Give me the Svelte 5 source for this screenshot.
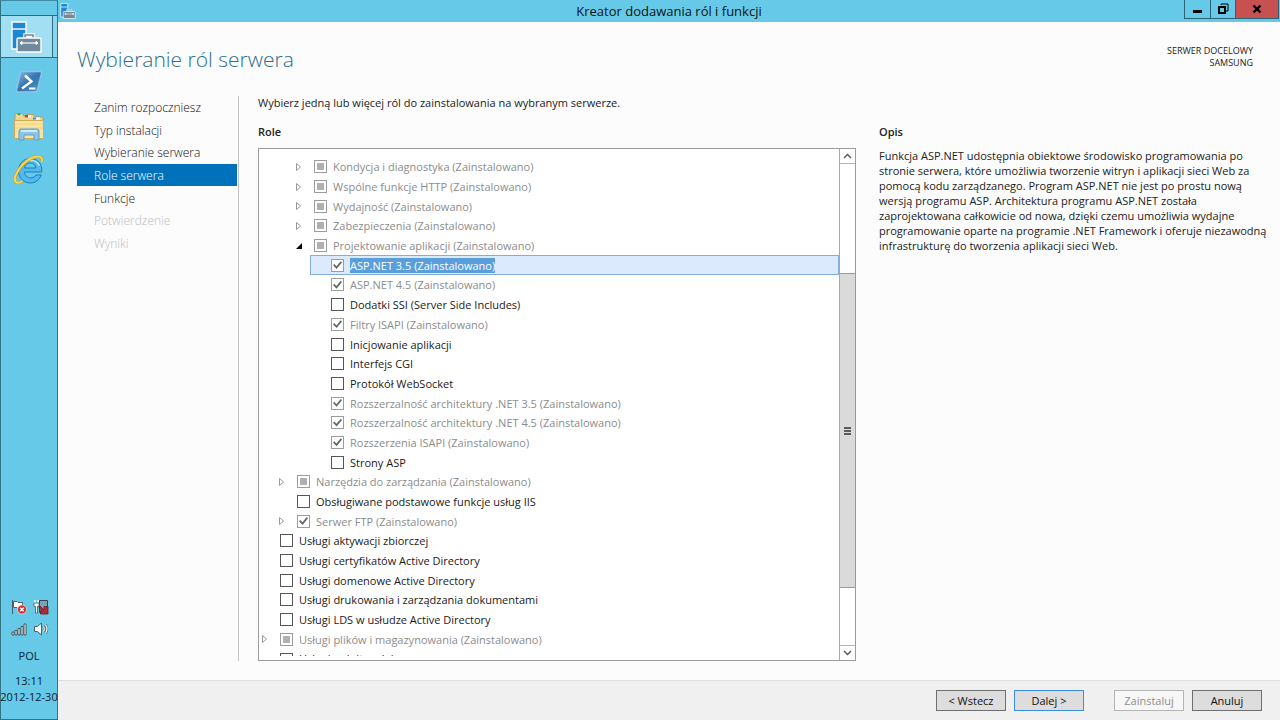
<script>
	const steps = [
		{ label: "Zanim rozpoczniesz" },
		{ label: "Typ instalacji" },
		{ label: "Wybieranie serwera" },
		{ label: "Role serwera", current: true },
		{ label: "Funkcje" },
		{ label: "Potwierdzenie", disabled: true },
		{ label: "Wyniki", disabled: true },
	];

	// state: 'off' | 'on' | 'partial'
	const roles = [
		{ level: 2, arrow: "closed", state: "partial", label: "Kondycja i diagnostyka", installed: true },
		{ level: 2, arrow: "closed", state: "partial", label: "Wspólne funkcje HTTP", installed: true },
		{ level: 2, arrow: "closed", state: "partial", label: "Wydajność", installed: true },
		{ level: 2, arrow: "closed", state: "partial", label: "Zabezpieczenia", installed: true },
		{ level: 2, arrow: "open", state: "partial", label: "Projektowanie aplikacji", installed: true },
		{ level: 3, state: "on", label: "ASP.NET 3.5", installed: true },
		{ level: 3, state: "on", label: "ASP.NET 4.5", installed: true },
		{ level: 3, state: "off", label: "Dodatki SSI (Server Side Includes)" },
		{ level: 3, state: "on", label: "Filtry ISAPI", installed: true },
		{ level: 3, state: "off", label: "Inicjowanie aplikacji" },
		{ level: 3, state: "off", label: "Interfejs CGI" },
		{ level: 3, state: "off", label: "Protokół WebSocket" },
		{ level: 3, state: "on", label: "Rozszerzalność architektury .NET 3.5", installed: true },
		{ level: 3, state: "on", label: "Rozszerzalność architektury .NET 4.5", installed: true },
		{ level: 3, state: "on", label: "Rozszerzenia ISAPI", installed: true },
		{ level: 3, state: "off", label: "Strony ASP" },
		{ level: 1, arrow: "closed", state: "partial", label: "Narzędzia do zarządzania", installed: true },
		{ level: 1, state: "off", label: "Obsługiwane podstawowe funkcje usług IIS" },
		{ level: 1, arrow: "closed", state: "on", label: "Serwer FTP", installed: true },
		{ level: 0, state: "off", label: "Usługi aktywacji zbiorczej" },
		{ level: 0, state: "off", label: "Usługi certyfikatów Active Directory" },
		{ level: 0, state: "off", label: "Usługi domenowe Active Directory" },
		{ level: 0, state: "off", label: "Usługi drukowania i zarządzania dokumentami" },
		{ level: 0, state: "off", label: "Usługi LDS w usłudze Active Directory" },
		{ level: 0, arrow: "closed", state: "partial", label: "Usługi plików i magazynowania", installed: true },
		{ level: 0, state: "off", label: "Usługi pulpitu zdalnego", cut: true },
	];

	let selected = $state(5);
</script>

{#snippet serverIcon()}
	<path d="M1 1h14v27H1z" fill="#1b87d6" stroke="#fff" stroke-width="1.4" />
	<path d="M1 8h14" stroke="#fff" stroke-width="1.4" />
	<path d="M14 17v-3h8v3" fill="none" stroke="#fff" stroke-width="3.4" />
	<path d="M14 17v-3h8v3" fill="none" stroke="#6f8797" stroke-width="1.6" />
	<path d="M6 18.500q0-1.500 1.500-1.500h21q1.500 0 1.500 1.500V31H6z" fill="#718a9b" stroke="#fff" stroke-width="1.4" />
	<path d="M9 22h18" stroke="#fff" stroke-width="1.2" />
	<path d="M9 22l2-1.500v3zM27 22l-2-1.500v3z" fill="#fff" stroke="#fff" />
{/snippet}

<div class="desktop">
	<aside class="taskbar">
		<button class="task active" aria-label="Menedżer serwera">
			<svg width="31" height="32" viewBox="0 0 31 32">{@render serverIcon()}</svg>
		</button>
		<button class="task" aria-label="Windows PowerShell">
			<svg width="28" height="24" viewBox="0 0 28 24">
				<defs>
					<linearGradient id="ps" x1="0" y1="0" x2="1" y2="1">
						<stop offset="0" stop-color="#8dbfe3" />
						<stop offset="0.5" stop-color="#3473b0" />
						<stop offset="1" stop-color="#4a9ed6" />
					</linearGradient>
				</defs>
				<path d="M6.500 1.500H25q2 0 1.500 2L22.500 20q-.5 2-2.500 2H3q-2 0-1.500-2L5 3.500q.4-2 1.500-2z" fill="url(#ps)" stroke="#8fc4e4" stroke-width="1.500" />
				<path d="M10 5.500l6.500 6L7 18.500" fill="none" stroke="#fff" stroke-width="2.400" />
				<path d="M14 18.500h6.500" stroke="#fff" stroke-width="2" />
			</svg>
		</button>
		<button class="task" aria-label="Eksplorator plików">
			<svg width="32" height="30" viewBox="0 0 32 30">
				<path d="M2 6V3q0-1.500 1.500-1.500H9L11 4h3V2.500h6l2 2.500h7q1 0 1 1v4H2z" fill="#f0d68a" stroke="#b8954a" stroke-width="0.800" />
				<path d="M4 3.200h4M13 4.500h5M21 6.500h6" stroke="#fff" stroke-width="2" />
				<path d="M4.500 1.500h3v2h-3z" fill="#31a04b" />
				<path d="M12 3h3v2.500h-3z" fill="#d0402c" />
				<path d="M20 5.500h3v2h-3z" fill="#3a8fd0" />
				<path d="M1.500 8.500h29v17q0 1-1 1H2.500q-1 0-1-1z" fill="#f9e3a0" stroke="#cfa955" />
				<path d="M2 12h28M2 16h28" stroke="#f3d27d" />
				<path d="M6 28v-9q0-2 2-2h16q2 0 2 2v9h-5v-5H11v5z" fill="#8cc5ea" stroke="#5c9fca" />
				<path d="M8 19h16" stroke="#dff2fd" stroke-width="1.600" />
			</svg>
		</button>
		<button class="task" aria-label="Internet Explorer">
			<svg width="32" height="32" viewBox="0 0 32 32">
				<path
					fill-rule="evenodd"
					d="M17.500 4.500C25 4.500 29.500 10 28.700 18H11.500C12 22 14.500 24 18 24Q21.500 24 23 21H28.200C26.500 26 22.500 29 17.500 29C10.500 29 5.500 24 5.500 16.800C5.500 9.500 10.500 4.500 17.500 4.500zM11.500 14H22.800C22.500 11 20.500 9 17.300 9C14 9 12 11 11.500 14z"
					fill="#52b9f0"
					stroke="#1f7db8"
				/>
				<path d="M7.500 13.500Q10 6.500 17.500 6.300Q24 6.300 26.500 12" fill="none" stroke="#b4e8fc" stroke-width="1.400" />
				<path d="M29 8Q30 2 24 2.500Q14 4 6.500 14.500Q-1 26 3.500 28.500Q6 29.500 9.500 27" fill="none" stroke="#c99a1e" stroke-width="3" />
				<path d="M29 8Q30 2 24 2.500Q14 4 6.500 14.500Q-1 26 3.500 28.500Q6 29.500 9.500 27" fill="none" stroke="#fbd64a" stroke-width="2" />
			</svg>
		</button>

		<div class="tray">
			<svg width="16" height="16" viewBox="0 0 16 16" role="img" aria-label="Centrum akcji">
				<path d="M1.500 1v14M2.500 2.500h3.500l1 1h4.500v6H7l-1-1H2.500z" fill="#fff" stroke="#47616d" />
				<circle cx="11" cy="10.500" r="4.500" fill="#d62b2b" stroke="#fff" stroke-width="0.600" />
				<path d="M9.200 8.700l3.600 3.600M12.800 8.700l-3.600 3.600" stroke="#fff" stroke-width="1.400" />
			</svg>
			<svg width="16" height="16" viewBox="0 0 16 16" role="img" aria-label="Sieć">
				<path d="M6.500 1.500h8v12h-8z" fill="#7aa4b5" stroke="#31464f" />
				<path d="M2 1v3M5 1v3" stroke="#fff" stroke-width="1.400" />
				<path d="M1 4h5v3.500H4.500V14h-2V7.500H1z" fill="#fff" stroke="#3f5661" stroke-width="0.800" />
				<path d="M7 7l4 4V7.500h4V15H7.500v-3.500H9L6 8.500z" fill="#b02a35" stroke="#6b1a24" stroke-width="0.800" />
			</svg>
			<svg width="16" height="16" viewBox="0 0 16 16" role="img" aria-label="Sygnał">
				<path d="M1 11h2v3H1zM4 9.500h2V14H4zM7 7.500h2V14H7zM10 5.500h2V14h-2zM13 3h2v11h-2z" fill="#fff" stroke="#3d5763" stroke-width="1" />
			</svg>
			<svg width="16" height="16" viewBox="0 0 16 16" role="img" aria-label="Głośność">
				<path d="M1.500 5.500h3L8.500 2v12l-4-3.500h-3z" fill="#fff" stroke="#47616d" />
				<path d="M10.500 5.500q1.500 2.500 0 5M12.500 3.500q3 4.500 0 9" fill="none" stroke="#47616d" stroke-width="2.400" />
				<path d="M10.500 5.500q1.500 2.500 0 5M12.500 3.500q3 4.500 0 9" fill="none" stroke="#fff" stroke-width="1.200" />
			</svg>
		</div>
		<div class="lang">POL</div>
		<div class="clock">
			<span>13:11</span>
			<span>2012-12-30</span>
		</div>
	</aside>

	<section class="window">
		<header class="titlebar">
			<svg class="app-icon" width="16" height="16" viewBox="0 0 31 32">{@render serverIcon()}</svg>
			<span class="title">Kreator dodawania ról i funkcji</span>
			<div class="controls">
				<button class="ctl min" aria-label="Minimalizuj">
					<svg width="12" height="12" viewBox="0 0 12 12"><path d="M1 7h9v3H1z" /></svg>
				</button>
				<button class="ctl max" aria-label="Przywróć">
					<svg width="12" height="12" viewBox="0 0 12 12">
						<path d="M4 2V1h7v7H9" fill="none" stroke="#000" stroke-width="1" />
						<path d="M2 4h6v6H2z" fill="none" stroke="#000" stroke-width="2" />
					</svg>
				</button>
				<button class="ctl close" aria-label="Zamknij">
					<svg width="12" height="12" viewBox="0 0 12 12"><path d="M2.500 2.500l7 7M9.500 2.500l-7 7" stroke="#000" stroke-width="2.400" /></svg>
				</button>
			</div>
		</header>

		<div class="head">
			<h1>Wybieranie ról serwera</h1>
			<p class="target">SERWER DOCELOWY<br />SAMSUNG</p>
		</div>

		<div class="body">
			<nav>
				<ul class="steps">
					{#each steps as step}
						<li class:current={step.current} class:disabled={step.disabled}>
							<a href="#step" aria-disabled={step.disabled}>{step.label}</a>
						</li>
					{/each}
				</ul>
			</nav>

			<main>
				<p class="intro">Wybierz jedną lub więcej ról do zainstalowania na wybranym serwerze.</p>
				<div class="columns">
					<div class="roles">
						<h2>Role</h2>
						<div class="listbox">
							<ul class="tree">
								{#each roles as role, i}
									<li class="row level-{role.level}" class:cut={role.cut} class:selected={i === selected}>
										<span class="twist">
											{#if role.arrow}
												<button aria-label={role.arrow === "open" ? "Zwiń" : "Rozwiń"}>
													<svg width="8" height="10" viewBox="0 0 8 10">
														{#if role.arrow === "open"}
															<path d="M7 2v6H1z" fill="#000" />
														{:else}
															<path d="M1.500 1.500v7L5.500 5z" fill="#fff" stroke="#999" />
														{/if}
													</svg>
												</button>
											{/if}
										</span>
										<input
											type="checkbox"
											id="role-{i}"
											checked={role.state === "on"}
											indeterminate={role.state === "partial"}
											disabled={role.installed}
										/>
										<label for="role-{i}" class:installed={role.installed}>
											{role.label}{role.installed ? " (Zainstalowano)" : ""}
										</label>
									</li>
								{/each}
							</ul>
							<div class="scrollbar">
								<button class="sb-btn" aria-label="W górę">
									<svg width="9" height="6" viewBox="0 0 9 6"><path d="M1 5l3.500-3.500L8 5" fill="none" stroke="#555" stroke-width="1.400" /></svg>
								</button>
								<div class="track">
									<div class="thumb">
										<svg width="7" height="8" viewBox="0 0 7 8"><path d="M0 1h7M0 4h7M0 7h7" stroke="#333" stroke-width="1.500" /></svg>
									</div>
								</div>
								<button class="sb-btn down" aria-label="W dół">
									<svg width="9" height="6" viewBox="0 0 9 6"><path d="M1 1l3.500 3.500L8 1" fill="none" stroke="#555" stroke-width="1.400" /></svg>
								</button>
							</div>
						</div>
					</div>
					<div class="description">
						<h2>Opis</h2>
						<p>
							Funkcja ASP.NET udostępnia obiektowe środowisko programowania po stronie serwera, które umożliwia
							tworzenie witryn i aplikacji sieci Web za pomocą kodu zarządzanego. Program ASP.NET nie jest po
							prostu nową wersją programu ASP. Architektura programu ASP.NET została zaprojektowana całkowicie od
							nowa, dzięki czemu umożliwia wydajne programowanie oparte na programie .NET Framework i oferuje
							niezawodną infrastrukturę do tworzenia aplikacji sieci Web.
						</p>
					</div>
				</div>
			</main>
		</div>

		<footer>
			<button class="btn">&lt; Wstecz</button>
			<button class="btn primary">Dalej &gt;</button>
			<button class="btn install" disabled>Zainstaluj</button>
			<button class="btn">Anuluj</button>
		</footer>
	</section>
</div>

<style>
	:global(body) {
		background: #fcfcfc;
	}

	.desktop {
		display: flex;
		height: 100vh;
		font-family: "Open Sans", "Noto Sans", sans-serif;
		font-size: 11px;
		line-height: 15px;
		color: #222;
	}

	h1, h2, p, ul {
		margin: 0;
		padding: 0;
		font-weight: 400;
		list-style: none;
	}

	button {
		font: inherit;
		color: inherit;
		padding: 0;
		border: none;
		background: none;
	}

	svg { display: block; }

	/* taskbar */
	.taskbar {
		display: flex;
		flex-direction: column;
		flex: none;
		box-sizing: border-box;
		width: 58px;
		padding-top: 14px;
		background: #66c9e8;
		border: 1px solid #347286;
		border-top-color: #3f8aa1;
		color: #06232d;
	}
	.task {
		display: flex;
		align-items: center;
		justify-content: center;
		height: 45px;
		padding-top: 2px;
	}
	.task:last-of-type { height: 44px; padding-top: 0; }
	/* the strip on the right is the edge of the stacked windows */
	.task.active {
		height: 43px;
		box-sizing: border-box;
		padding: 0 5px 0 0;
		background: linear-gradient(to right, #a3dff2 51px, #2d6b80 51px 52px, #8bd6ee 52px);
		border: solid #2d6b80;
		border-width: 1px 0;
	}
	.tray {
		display: grid;
		grid-template-columns: 16px 16px;
		gap: 6px;
		justify-content: center;
		margin-top: auto;
		padding-left: 2px;
	}
	.lang {
		margin-top: 11px;
		text-align: center;
	}
	.clock {
		display: flex;
		flex-direction: column;
		align-items: center;
		margin: 10px 0 14px;
		line-height: 16px;
		white-space: nowrap;
	}

	/* window */
	.window {
		display: flex;
		flex-direction: column;
		flex: 1;
		min-width: 0;
	}
	.titlebar {
		display: grid;
		grid-template-columns: 1fr auto 1fr;
		height: 22px;
		background: #66c9e8;
		color: #111;
	}
	.app-icon { margin: 3px 0 0 2px; }
	.title {
		font-size: 13px;
		line-height: 22px;
	}
	.controls {
		display: flex;
		justify-content: flex-end;
		height: 19px;
		padding-right: 1px;
	}
	.ctl {
		display: flex;
		align-items: center;
		justify-content: center;
		box-sizing: border-box;
		width: 25px;
		border: 1px solid #2b6277;
		border-top: none;
		border-right: none;
	}
	.ctl.min { width: 26px; }
	.ctl.close {
		width: 44px;
		background: #c75050;
		border-right: 1px solid #2b6277;
	}

	.head {
		display: flex;
		justify-content: space-between;
		padding: 21px 27px 0 19px;
		height: 53px;
	}
	h1 {
		font-size: 21px;
		line-height: 32px;
		font-weight: 300;
		color: #2a6f8f;
	}
	.target {
		padding-top: 2px;
		font-size: 9px;
		line-height: 12px;
		text-align: right;
	}

	.body {
		display: flex;
		flex: 1;
		min-height: 0;
		padding-bottom: 19px;
	}
	nav {
		flex: none;
		width: 161px;
		margin-left: 19px;
		border-right: 1px solid #c4c4c4;
	}
	.steps {
		display: flex;
		flex-direction: column;
		height: 158px;
		margin-right: 1px;
	}
	.steps li {
		display: flex;
		flex: 1;
		align-items: center;
		padding: 1px 0 0 17px;
		font-size: 12px;
	}
	.steps a {
		font-weight: 300;
		color: #111;
		text-decoration: none;
	}
	.steps .current { background: #0072bc; }
	.steps .current a { color: #fff; }
	.steps .disabled a { color: #bbb; }

	main {
		display: flex;
		flex-direction: column;
		flex: 1;
		min-width: 0;
		padding: 0 9px 0 19px;
	}
	.intro { line-height: 14px; }
	.columns {
		display: flex;
		gap: 23px;
		flex: 1;
		min-height: 0;
		padding-top: 14px;
	}
	h2 {
		font-size: 11px;
		font-weight: 600;
	}
	.roles {
		display: flex;
		flex-direction: column;
		flex: 1;
		gap: 9px;
	}
	.description {
		flex: none;
		width: 392px;
	}
	.description p { margin-top: 9px; }

	.listbox {
		display: flex;
		flex: 1;
		min-height: 0;
		border: 1px solid #9b9b9b;
		background: #fff;
	}
	.tree {
		display: flex;
		flex-direction: column;
		flex: 1;
		padding: 8px 0 4px;
	}
	.row {
		display: flex;
		align-items: center;
		flex: 1;
		min-height: 0;
		box-sizing: border-box;
		border: 1px solid transparent;
	}
	/* last row is scrolled half out of view */
	.row.cut {
		flex: none;
		align-items: flex-start;
		height: 7px;
		border-width: 0 1px;
		overflow: hidden;
	}
	.row.cut input { margin-top: 4px; }
	.row.cut label { margin-top: 2px; }
	.level-1 { margin-left: 17px; }
	.level-2 { margin-left: 34px; }
	.level-3 { margin-left: 51px; }
	.row.selected {
		background: #dbeafd;
		border-color: #84acdd;
	}
	.twist {
		flex: none;
		width: 20px;
	}
	.twist button {
		display: block;
		padding-left: 1px;
	}

	input[type="checkbox"] {
		appearance: none;
		flex: none;
		display: grid;
		place-content: center;
		box-sizing: border-box;
		width: 13px;
		height: 13px;
		margin: 0 6px 0 0;
		border: 1px solid #555;
		background: #fff;
	}
	input[type="checkbox"]:disabled { border-color: #9c9c9c; }
	input:checked::before {
		content: "";
		width: 9px;
		height: 9px;
		background: #666;
		clip-path: polygon(0 50%, 14% 36%, 38% 62%, 86% 4%, 100% 18%, 40% 92%);
	}
	input:indeterminate::before {
		content: "";
		width: 7px;
		height: 7px;
		background: #b0b0b0;
	}
	label {
		white-space: nowrap;
		color: #1a1a1a;
	}
	label.installed { color: #8c8c8c; }
	.selected label.installed {
		background: #5a9fdb;
		color: #fff;
	}

	.scrollbar {
		display: flex;
		flex-direction: column;
		flex: none;
		width: 15px;
		border-left: 1px solid #a8a8a8;
	}
	.sb-btn {
		display: flex;
		align-items: center;
		justify-content: center;
		height: 15px;
		border-bottom: 1px solid #b4b4b4;
	}
	.sb-btn.down {
		border-top: 1px solid #b4b4b4;
		border-bottom: none;
	}
	.track {
		display: grid;
		grid-template-rows: 109fr 314fr 57fr;
		flex: 1;
	}
	.thumb {
		display: flex;
		align-items: center;
		justify-content: center;
		grid-row: 2;
		background: #dadada;
		border: solid #9a9a9a;
		border-width: 1px 0;
	}

	footer {
		display: flex;
		gap: 8px;
		box-sizing: border-box;
		height: 40px;
		padding: 9px 18px 0 0;
		justify-content: flex-end;
		background: #f0f0f0;
		border-top: 1px solid #dfdfdf;
	}
	.btn {
		box-sizing: border-box;
		width: 70px;
		height: 21px;
		border: 1px solid #707070;
		background: #dddddd;
		color: #111;
	}
	.btn.primary { border-color: #3c8fe0; }
	.btn.install {
		margin-left: 22px;
		border-color: #b5b5b5;
		background: #f7f7f7;
		color: #8e8e8e;
	}
</style>
